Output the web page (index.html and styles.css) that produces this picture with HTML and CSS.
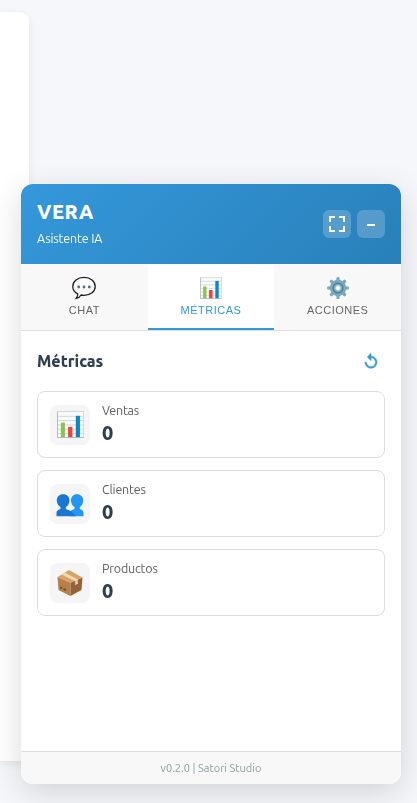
FILE: index.html
```html
<!DOCTYPE html>
<html lang="es">
<head>
<meta charset="utf-8">
<meta name="viewport" content="width=device-width, initial-scale=1">
<title>VERA</title>
<link rel="stylesheet" href="styles.css">
</head>
<body>
<svg class="sprite" aria-hidden="true">
  <symbol id="chart" viewBox="0 0 28 28">
    <rect x=".5" y=".5" width="27" height="27" fill="#fafafa" stroke="#cfd8dc"/>
    <path d="M1 5.500h26M1 10h26M1 14.500h26M1 19h26M1 23.500h26" stroke="#c5d3da" stroke-width=".9"/>
    <path d="M.5 1v26.500h27" fill="none" stroke="#a9bac3"/>
    <path d="M4 12h4.200v15H4z" fill="#8bc34a"/>
    <path d="M11.500 16.500h4.500V27h-4.500z" fill="#f44336"/>
    <path d="M19.500 5h4.300v22h-4.300z" fill="#0288d1"/>
  </symbol>
</svg>
<div class="page-card"></div>
<section class="widget">
  <header class="header">
    <div>
      <h1 class="title">VERA</h1>
      <p class="subtitle">Asistente IA</p>
    </div>
    <div class="controls">
      <button class="control"><svg width="16" height="16" viewBox="0 0 16 16"><path d="M1 6V1h5M10 1h5v5M15 10v5h-5M6 15H1v-5" fill="none" stroke="#fff" stroke-width="2"/></svg></button>
      <button class="control"><svg width="16" height="16" viewBox="0 0 16 16"><path d="M4 8h8v2H4z" fill="#fff"/></svg></button>
    </div>
  </header>
  <nav class="tabs">
    <button class="tab">
      <svg class="tab-icon" viewBox="0 0 24 24"><path d="M12 1.400c6.500 0 11.200 3.900 11.200 9s-4.700 8.900-11.200 8.900c-1 0-2-.1-2.900-.3-1 1.700-2.700 3.100-4.900 3.400 1.200-1.300 1.700-2.900 1.500-4.600C2.600 16.200.8 13.500.8 10.400c0-5.100 4.700-9 11.200-9z" fill="#fcfcfc" stroke="#1c1c1c" stroke-width="1.300"/><g fill="#546e7a"><circle cx="6.700" cy="11" r="1.450"/><circle cx="12" cy="11" r="1.450"/><circle cx="17.300" cy="11" r="1.450"/></g></svg>
      <span>CHAT</span>
    </button>
    <button class="tab active">
      <svg class="tab-icon chart"><use href="#chart"/></svg>
      <span>MÉTRICAS</span>
    </button>
    <button class="tab">
      <svg class="tab-icon" viewBox="0 0 24 24"><g fill="#78a9bc"><path id="tooth" d="M10.200 5l.3-3.500q1.500-1 3 0l.3 3.500z"/><use href="#tooth" transform="rotate(45 12 12)"/><use href="#tooth" transform="rotate(90 12 12)"/><use href="#tooth" transform="rotate(135 12 12)"/><use href="#tooth" transform="rotate(180 12 12)"/><use href="#tooth" transform="rotate(225 12 12)"/><use href="#tooth" transform="rotate(270 12 12)"/><use href="#tooth" transform="rotate(315 12 12)"/><circle cx="12" cy="12" r="8.200"/></g><circle cx="12" cy="12" r="4.800" fill="#82aebf" stroke="#518096" stroke-width="1.500"/><circle cx="12" cy="12" r="2.400" fill="#fff" stroke="#b5d1db"/></svg>
      <span>ACCIONES</span>
    </button>
  </nav>
  <main class="content">
    <div class="content-head">
      <h2 class="heading">Métricas</h2>
      <button class="refresh"><svg width="18" height="18" viewBox="0 0 24 24"><path fill="#3498db" stroke="#3498db" stroke-width=".7" d="M12 5.500v-4L7 6.500l5 5v-4c3.310 0 6 2.690 6 6s-2.690 6-6 6-6-2.690-6-6H4c0 4.420 3.580 8 8 8s8-3.580 8-8-3.580-8-8-8z"/></svg></button>
    </div>
    <div class="cards">
      <article class="card">
        <div class="card-icon"><svg width="27" height="27"><use href="#chart"/></svg></div>
        <div class="card-text"><p class="label">Ventas</p><p class="value">0</p></div>
      </article>
      <article class="card">
        <div class="card-icon"><svg width="28" height="28" viewBox="0 -1.200 28 28"><path d="M14 25v-3.500c0-2 1.700-2.800 4.500-3.700v-2c-2-1.300-3.500-3.600-3.500-6.600 0-3.700 2.400-6.200 6-6.200s6.200 2.500 6.200 6.200c0 3-1.400 5.300-3.400 6.600v2c2.700.900 3.700 1.700 3.700 3.700V25z" fill="#2196f3"/><path d="M.5 25v-3.500c0-2 1.200-2.800 4-3.700v-2c-2-1.300-3.700-3.600-3.700-6.600C.8 5.500 3.400 3 7.200 3s6.300 2.500 6.300 6.200c0 3-1.600 5.300-3.600 6.600v2l4.900 2.100L20 25z" fill="#1976d2"/></svg></div>
        <div class="card-text"><p class="label">Clientes</p><p class="value">0</p></div>
      </article>
      <article class="card">
        <div class="card-icon"><svg width="28" height="28" viewBox="0 .5 28 28"><path d="M1.500 8.500L14.500 14v13.500L2.500 21.500z" fill="#b78049"/><path d="M14.500 14l12-5-1 12.500-11 6z" fill="#966239"/><path d="M1.500 8.500L13 1.500l13.500 7.500-12 5.500z" fill="#d6a36c"/><path d="M5.500 6l3-1.900L22 11v4l-3 1.500v-4z" fill="#f4d8ad"/><path d="M19 12.500l3-1.400v4l-3 1.500z" fill="#d7c4ac"/><path d="M4 18l2 .8v2L4 20zM7.500 19.500l2.500 1v2l-2.500-1z" fill="#715033"/></svg></div>
        <div class="card-text"><p class="label">Productos</p><p class="value">0</p></div>
      </article>
    </div>
  </main>
  <footer class="footer"><span>v0.2.0 | Satori Studio</span></footer>
</section>
</body>
</html>
```
FILE: styles.css
```css
* { box-sizing: border-box; margin: 0; padding: 0; }
html, body { height: 100%; overflow: hidden; }
body {
  padding-top: 12px;
  background: #f5f7fb;
  font-family: Ubuntu, "Noto Sans", sans-serif;
  color: #2c3e50;
}
button { border: 0; background: none; font: inherit; }
svg { display: block; }
.sprite { position: absolute; width: 0; height: 0; }
.page-card {
  width: 29px;
  height: 749px;
  background: #fff;
  border-radius: 0 10px 4px 0;
  box-shadow: 0 2px 8px rgba(0, 0, 0, .08);
}
.widget {
  position: fixed;
  right: 16px;
  bottom: 19px;
  display: flex;
  flex-direction: column;
  width: 380px;
  height: 600px;
  overflow: hidden;
  background: #fff;
  border-radius: 12px;
  box-shadow: 0 8px 32px rgba(0, 0, 0, .15);
}
.header {
  display: flex;
  align-items: center;
  justify-content: space-between;
  height: 80px;
  padding: 0 16px;
  color: #fff;
  background: linear-gradient(135deg, #3498db, #2980b9);
}
.title { font-size: 20px; line-height: 24px; font-weight: 800; letter-spacing: .5px; }
.subtitle { margin: 5px 0 1px; font-size: 12.500px; line-height: 18px; letter-spacing: -.15px; opacity: .95; }
.controls { display: flex; gap: 6px; }
.control {
  display: grid;
  place-items: center;
  width: 28px;
  height: 28px;
  border-radius: 6px;
  background: rgba(255, 255, 255, .2);
}
.tabs {
  display: grid;
  grid-template-columns: repeat(3, 1fr);
  height: 67px;
  background: #f8f8f8;
  border-bottom: 1px solid #ddd;
}
.tab {
  display: flex;
  flex-direction: column;
  align-items: center;
  gap: 4px;
  padding-top: 12px;
  border-bottom: 2px solid transparent;
  color: #666;
  font: 11px/13px "Liberation Sans", sans-serif;
  letter-spacing: .5px;
}
.tab.active { background: #fff; color: #3498db; border-color: #3498db; }
.tab-icon { width: 24px; height: 24px; }
.tab-icon.chart { padding: 1px; }
.content { flex: 1; padding: 16px; }
.content-head { display: flex; align-items: center; justify-content: space-between; height: 28px; }
.heading { font-size: 16px; line-height: 24px; font-weight: 800; }
.refresh { display: grid; place-items: center; width: 28px; height: 28px; }
.cards { display: grid; gap: 12px; margin-top: 16px; }
.card {
  display: flex;
  align-items: center;
  gap: 12px;
  height: 67px;
  padding: 0 12px;
  border: 1px solid #ddd;
  border-radius: 8px;
}
.card-icon {
  display: grid;
  place-items: center;
  width: 40px;
  height: 40px;
  border-radius: 8px;
  background: #f5f5f5;
}
.card-text { padding-bottom: 5px; }
.label { font-size: 12.500px; line-height: 18px; letter-spacing: -.2px; color: #606060; }
.value { margin-top: 2px; font-size: 20px; line-height: 23px; font-weight: 800; }
.footer {
  display: grid;
  place-items: center;
  height: 33px;
  border-top: 1px solid #ddd;
  background: #f8f8f8;
  color: #8d9fa0;
  font-size: 11px;
  line-height: 16px;
}
```
